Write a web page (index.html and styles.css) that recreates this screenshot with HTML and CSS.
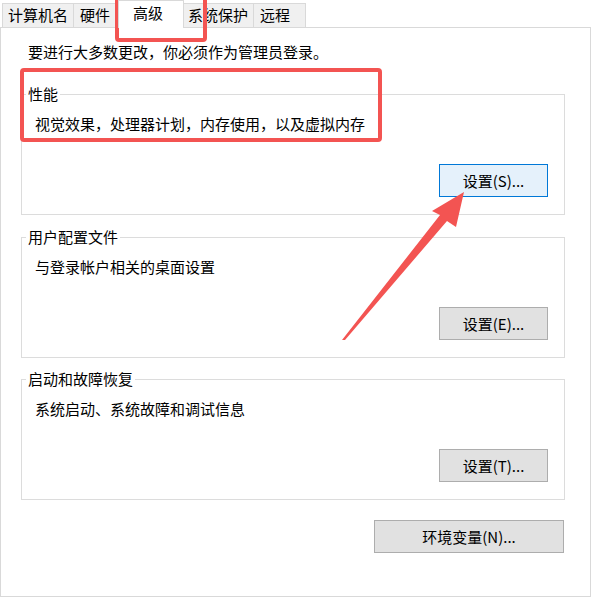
FILE: index.html
```html
<!DOCTYPE html>
<html lang="zh-CN">
<head>
  <meta charset="UTF-8" />
  <meta name="viewport" content="width=device-width, initial-scale=1" />
  <title>系统属性 - 高级</title>
  <link rel="stylesheet" href="styles.css">
</head>
<body>
  <div class="window">
    <div class="tabs">
      <div class="tab tab-name">计算机名</div>
      <div class="tab tab-hw">硬件</div>
      <div class="tab tab-adv active">高级</div>
      <div class="tab tab-protect">系统保护</div>
      <div class="tab tab-remote">远程</div>
    </div>

    <div class="panel">
      <p class="intro">要进行大多数更改，你必须作为管理员登录。</p>

      <fieldset class="group">
        <legend>性能</legend>
        <div class="group-body">
          <p class="desc">视觉效果，处理器计划，内存使用，以及虚拟内存</p>
          <button class="btn focused">设置(S)...</button>
        </div>
      </fieldset>

      <fieldset class="group">
        <legend>用户配置文件</legend>
        <div class="group-body">
          <p class="desc">与登录帐户相关的桌面设置</p>
          <button class="btn">设置(E)...</button>
        </div>
      </fieldset>

      <fieldset class="group group-startup">
        <legend>启动和故障恢复</legend>
        <div class="group-body">
          <p class="desc">系统启动、系统故障和调试信息</p>
          <button class="btn">设置(T)...</button>
        </div>
      </fieldset>

      <button class="btn btn-env">环境变量(N)...</button>
    </div>

    <!-- red annotation marks drawn on top of the dialog -->
    <div class="mark mark-tab"></div>
    <div class="mark mark-perf"></div>
    <svg class="arrow" width="593" height="598" viewBox="0 0 593 598">
      <polygon points="342,340 440,215 432,211 464,192 456,227 447,221 345,340" fill="#f35452"/>
    </svg>
  </div>
</body>
</html>
```
FILE: styles.css
```css
* {
  box-sizing: border-box;
}
body {
  margin: 0;
  background: #fff;
  font-family: "Noto Sans CJK SC", "Microsoft YaHei", sans-serif;
  font-size: 15px;
  line-height: 20px;
  color: #000;
}
p {
  margin: 0;
}
.window {
  position: relative;
  width: 593px;
  height: 598px;
}

/* tab strip */
.tabs {
  display: flex;
  align-items: flex-start;
  height: 27px;
  padding: 3px 0 0 2px;
}
.tab {
  height: 24px;
  margin-right: -1px;
  padding: 1px 0 0 5px;
  border: 1px solid #d9d9d9;
  border-bottom: none;
  background: #f0f0f0;
  white-space: nowrap;
}
.tab-name { width: 72px; }
.tab-hw { width: 46px; padding-left: 6px; }
.tab-adv { width: 66px; }
.tab-protect { width: 71px; padding-left: 4px; }
.tab-remote { width: 53px; padding-left: 6px; }
.tab.active {
  position: relative;
  z-index: 1;
  height: 28px;
  margin-top: -3px;
  padding: 2px 0 0 14px;
  background: #fff;
}

/* page body */
.panel {
  display: flex;
  flex-direction: column;
  width: 591px;
  height: 570px;
  padding: 14px 0 0 20px;
  border: 1px solid #d9d9d9;
}
.intro {
  margin: 0 0 22px 7px;
}
.group {
  width: 544px;
  margin: 0;
  padding: 0;
  border: 1px solid #dcdcdc;
}
.group + .group {
  margin-top: 12px;
}
.group + .group-startup {
  margin-top: 11px;
}
.group legend {
  margin-left: 4px;
  padding: 0 2px;
}
.group-body {
  display: flex;
  flex-direction: column;
  padding: 10px 16px 17px 13px;
}
.group-body .btn {
  align-self: flex-end;
  margin-top: 30px;
}

.btn {
  width: 109px;
  height: 33px;
  padding: 0;
  border: 1px solid #adadad;
  background: #e1e1e1;
  font-family: inherit;
  font-size: 15px;
  color: #000;
}
.btn.focused {
  border-color: #0078d7;
  background: #e5f1fb;
}
.btn-env {
  align-self: flex-end;
  width: 190px;
  margin: 20px 26px 0 0;
}

/* annotation overlay */
.mark {
  position: absolute;
  border: 4px solid #f35452;
  border-radius: 4px;
}
.mark-tab {
  left: 115px;
  top: -5px;
  width: 92px;
  height: 47px;
}
.mark-perf {
  left: 20px;
  top: 68px;
  width: 362px;
  height: 74px;
}
.arrow {
  position: absolute;
  left: 0;
  top: 0;
  pointer-events: none;
}
```
